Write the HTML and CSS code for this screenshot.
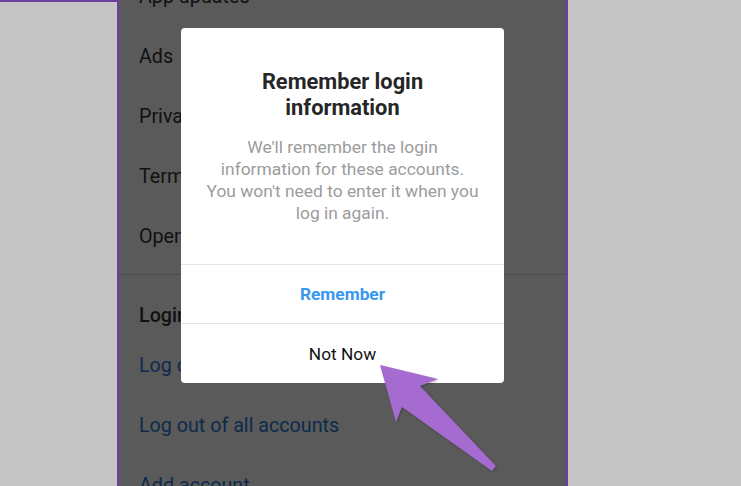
FILE: index.html
```html
<!DOCTYPE html>
<html lang="en">
<head>
<meta charset="utf-8">
<title>Remember login information</title>
<link rel="stylesheet" href="styles.css">
</head>
<body>
<div class="stage">
  <div class="side side-left"></div>
  <div class="phone">
    <div class="menu">
      <div class="section">
        <div class="row">App updates</div>
        <div class="row">Ads</div>
        <div class="row">Privacy Policy</div>
        <div class="row">Terms of Use</div>
        <div class="row">Open Source Libraries</div>
      </div>
      <div class="section section-login">
        <div class="heading">Login</div>
        <div class="row link">Log out of user</div>
        <div class="row link">Log out of all accounts</div>
        <div class="row link">Add account</div>
      </div>
    </div>
    <div class="dialog">
      <div class="dialog-body">
        <h1 class="dialog-title">Remember login information</h1>
        <p class="dialog-text">We'll remember the login information for these accounts. You won't need to enter it when you log in again.</p>
      </div>
      <button class="dialog-btn primary">Remember</button>
      <button class="dialog-btn">Not Now</button>
    </div>
    <svg class="arrow" width="130" height="120" viewBox="370 355 130 120" aria-hidden="true">
      <polygon points="380,365 438,379 420,386 496,466 492,471 402,407 396,422" fill="#a56bd1" />
    </svg>
  </div>
  <div class="side side-right"></div>
</div>
</body>
</html>
```
FILE: styles.css
```css
html, body {
  margin: 0;
  padding: 0;
}
body {
  background: #c5c5c5;
  font-family: Roboto, "Noto Sans", sans-serif;
  width: 741px;
  height: 486px;
  overflow: hidden;
}
.stage {
  display: flex;
  height: 486px;
}
.side {
  background: #c5c5c5;
}
.side-left {
  width: 117px;
  border-top: 2px solid #6f3fa0;
  height: 0;
}
.side-right {
  flex: 1;
}
.phone {
  position: relative;
  width: 447px;
  background: #5a5a5a;
  border-left: 2px solid #6f3fa0;
  border-right: 2px solid #6f3fa0;
  overflow: hidden;
}
.menu {
  margin-top: -34px;
}
.section {
  padding-bottom: 8px;
  border-bottom: 1px solid #4c4c4c;
}
.section-login {
  border-bottom: none;
  padding-top: 20px;
}
.row {
  height: 60px;
  display: flex;
  align-items: center;
  padding-left: 20px;
  font-size: 19.7px;
  color: #111;
  white-space: nowrap;
}
.heading {
  height: 40px;
  display: flex;
  align-items: center;
  padding-left: 20px;
  font-size: 19.7px;
  font-weight: 500;
  color: #111;
}
.link {
  color: #0d2a4c;
}
.dialog {
  position: absolute;
  left: 62px;
  top: 28px;
  width: 323px;
  background: #fff;
  border-radius: 4px;
  display: flex;
  flex-direction: column;
}
.dialog-body {
  padding: 41px 24px 40px;
  text-align: center;
}
.dialog-title {
  margin: 0 0 15px;
  font-size: 21.8px;
  line-height: 26px;
  font-weight: 700;
  color: #262626;
  padding: 0 40px;
}
.dialog-text {
  margin: 0;
  font-size: 17.4px;
  line-height: 22px;
  color: #9c9c9c;
}
.dialog-btn {
  height: 60px;
  border: none;
  border-top: 1px solid #e4e4e4;
  background: none;
  font-family: Roboto, "Noto Sans", sans-serif;
  font-size: 17.3px;
  color: #111;
  padding: 0;
}
.dialog-btn.primary {
  height: 59px;
  color: #3897f0;
  font-weight: 700;
}
.arrow {
  position: absolute;
  left: 251px;
  top: 355px;
  filter: drop-shadow(1px 1px 1px rgba(0,0,0,0.25));
}
```
